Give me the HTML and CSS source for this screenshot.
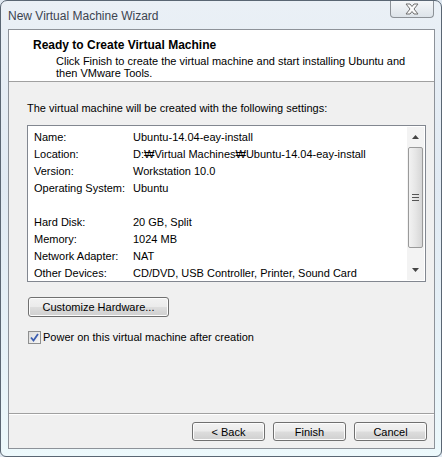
FILE: index.html
```html
<!DOCTYPE html>
<html>
<head>
<meta charset="utf-8">
<link rel="stylesheet" href="styles.css">
</head>
<body>
<div class="window">
  <div class="titlebar">
    <span class="title">New Virtual Machine Wizard</span>
    <div class="close">
      <svg width="16" height="12" viewBox="0 0 16 12"><path d="M2 1 L6 1 L8 3.5 L10 1 L14 1 L10 6 L14 11 L10 11 L8 8.5 L6 11 L2 11 L6 6 Z" fill="#fafafa" stroke="#6e6e6e" stroke-width="1"/></svg>
    </div>
  </div>
  <div class="client">
    <div class="header">
      <div class="h-title">Ready to Create Virtual Machine</div>
      <div class="h-desc">Click Finish to create the virtual machine and start installing Ubuntu and then VMware Tools.</div>
    </div>
    <div class="content">
      <div class="intro">The virtual machine will be created with the following settings:</div>
      <div class="listbox">
        <div class="rows">
          <div class="row"><span class="lbl">Name:</span><span>Ubuntu-14.04-eay-install</span></div>
          <div class="row"><span class="lbl">Location:</span><span>D:₩Virtual Machines₩Ubuntu-14.04-eay-install</span></div>
          <div class="row"><span class="lbl">Version:</span><span>Workstation 10.0</span></div>
          <div class="row"><span class="lbl">Operating System:</span><span>Ubuntu</span></div>
          <div class="row"></div>
          <div class="row"><span class="lbl">Hard Disk:</span><span>20 GB, Split</span></div>
          <div class="row"><span class="lbl">Memory:</span><span>1024 MB</span></div>
          <div class="row"><span class="lbl">Network Adapter:</span><span>NAT</span></div>
          <div class="row"><span class="lbl">Other Devices:</span><span>CD/DVD, USB Controller, Printer, Sound Card</span></div>
        </div>
        <div class="scrollbar">
          <div class="arrow"><svg width="7" height="4" viewBox="0 0 7 4"><path d="M0 4 L3.5 0 L7 4 Z" fill="#444"/></svg></div>
          <div class="thumb">
            <svg width="7" height="7" viewBox="0 0 7 7"><path d="M0 0.5 H7 M0 3.5 H7 M0 6.5 H7" stroke="#555" stroke-width="1"/></svg>
          </div>
          <div class="track"></div>
          <div class="arrow"><svg width="7" height="4" viewBox="0 0 7 4"><path d="M0 0 L3.5 4 L7 0 Z" fill="#444"/></svg></div>
        </div>
      </div>
      <button class="btn custom">Customize Hardware...</button>
      <label class="check">
        <span class="box"><svg width="9" height="9" viewBox="0 0 9 9"><path d="M1 4.5 L3.5 7.5 L8 1" fill="none" stroke="#3b5db0" stroke-width="1.8"/></svg></span>
        <span>Power on this virtual machine after creation</span>
      </label>
    </div>
    <div class="footer">
      <button class="btn nav">&lt; Back</button>
      <button class="btn nav">Finish</button>
      <button class="btn nav">Cancel</button>
    </div>
  </div>
</div>
</body>
</html>
```
FILE: styles.css
```css
html, body {
  margin: 0;
  padding: 0;
}
body {
  width: 442px;
  height: 457px;
  overflow: hidden;
  font-family: "Liberation Sans", Arial, sans-serif;
  font-size: 11px;
  color: #000;
  background: #dfe8f1;
}
.window {
  box-sizing: border-box;
  width: 442px;
  height: 457px;
  padding: 0 7px 0 7px;
  border: 1px solid #5a6673;
  border-radius: 7px 7px 6px 6px;
  background: linear-gradient(180deg, #eaf0f6 0%, #e1eaf3 40%, #e7f2f8 80%, #edf9fc 100%);
  display: flex;
  flex-direction: column;
}
.titlebar {
  height: 28px;
  display: flex;
  align-items: flex-start;
  justify-content: space-between;
}
.title {
  margin-top: 8px;
  font-size: 12px;
  color: #3c4450;
}
.close {
  width: 44px;
  height: 17px;
  box-sizing: border-box;
  border: 1px solid #8c9197;
  border-top: none;
  border-radius: 0 0 4px 4px;
  background: linear-gradient(180deg, #f4f6f8 0%, #e9edf1 50%, #dde3e9 100%);
  display: flex;
  align-items: center;
  justify-content: center;
}
.client {
  width: 427px;
  height: 420px;
  box-sizing: border-box;
  border: 1px solid #8d9299;
  background: #f0f0f0;
  display: flex;
  flex-direction: column;
}
.header {
  background: #fff;
  height: 52px;
  box-sizing: border-box;
  border-bottom: 1px solid #a0a0a0;
  padding: 8px 0 0 24px;
}
.h-title {
  font-weight: bold;
  font-size: 12px;
  line-height: 14px;
}
.h-desc {
  padding-left: 23px;
  padding-right: 20px;
  line-height: 12px;
  margin-top: 3px;
}
.content {
  flex: 1;
  padding: 19px 0 0 18px;
}
.intro {
  line-height: 14px;
  margin-bottom: 10px;
}
.listbox {
  width: 399px;
  height: 157px;
  box-sizing: border-box;
  border: 1px solid #828790;
  background: #fff;
  display: flex;
}
.rows {
  flex: 1;
  padding: 3px 0 0 6px;
}
.row {
  height: 17px;
  line-height: 17px;
  display: flex;
  white-space: nowrap;
}
.lbl {
  width: 99px;
  flex: none;
}
.scrollbar {
  width: 17px;
  margin: 1px 1px 1px 0;
  background: #f3f3f3;
  display: flex;
  flex-direction: column;
}
.arrow {
  height: 20px;
  display: flex;
  align-items: center;
  justify-content: center;
}
.thumb {
  height: 101px;
  box-sizing: border-box;
  margin: 0 1px;
  border: 1px solid #9a9a9a;
  border-radius: 2px;
  background: linear-gradient(90deg, #f2f2f2 0%, #e6e6e6 50%, #d6d6d6 100%);
  display: flex;
  align-items: center;
  justify-content: center;
}
.track {
  flex: 1;
}
.btn {
  font-family: "Liberation Sans", Arial, sans-serif;
  font-size: 11px;
  color: #000;
  height: 20px;
  box-sizing: border-box;
  border: 1px solid #707070;
  border-radius: 3px;
  background: linear-gradient(180deg, #f2f2f2 0%, #ebebeb 48%, #dddddd 52%, #cfcfcf 100%);
  box-shadow: inset 0 0 0 1px #fcfcfc;
  padding: 0;
  line-height: 16px;
}
.custom {
  display: block;
  width: 141px;
  margin: 15px 0 0 1px;
}
.check {
  display: flex;
  align-items: center;
  margin: 13px 0 0 1px;
  line-height: 14px;
}
.box {
  width: 13px;
  height: 13px;
  box-sizing: border-box;
  border: 1px solid #8e8f8f;
  background: linear-gradient(135deg, #dcdcdc 0%, #f6f6f6 100%);
  display: flex;
  align-items: center;
  justify-content: center;
  margin-right: 2px;
}
.footer {
  height: 35px;
  box-sizing: border-box;
  border-top: 1px solid #a0a0a0;
  box-shadow: inset 0 1px 0 #ffffff;
  display: flex;
  justify-content: flex-end;
  gap: 8px;
  padding: 8px 7px 0 0;
}
.nav {
  width: 73px;
  height: 19px;
}
```
